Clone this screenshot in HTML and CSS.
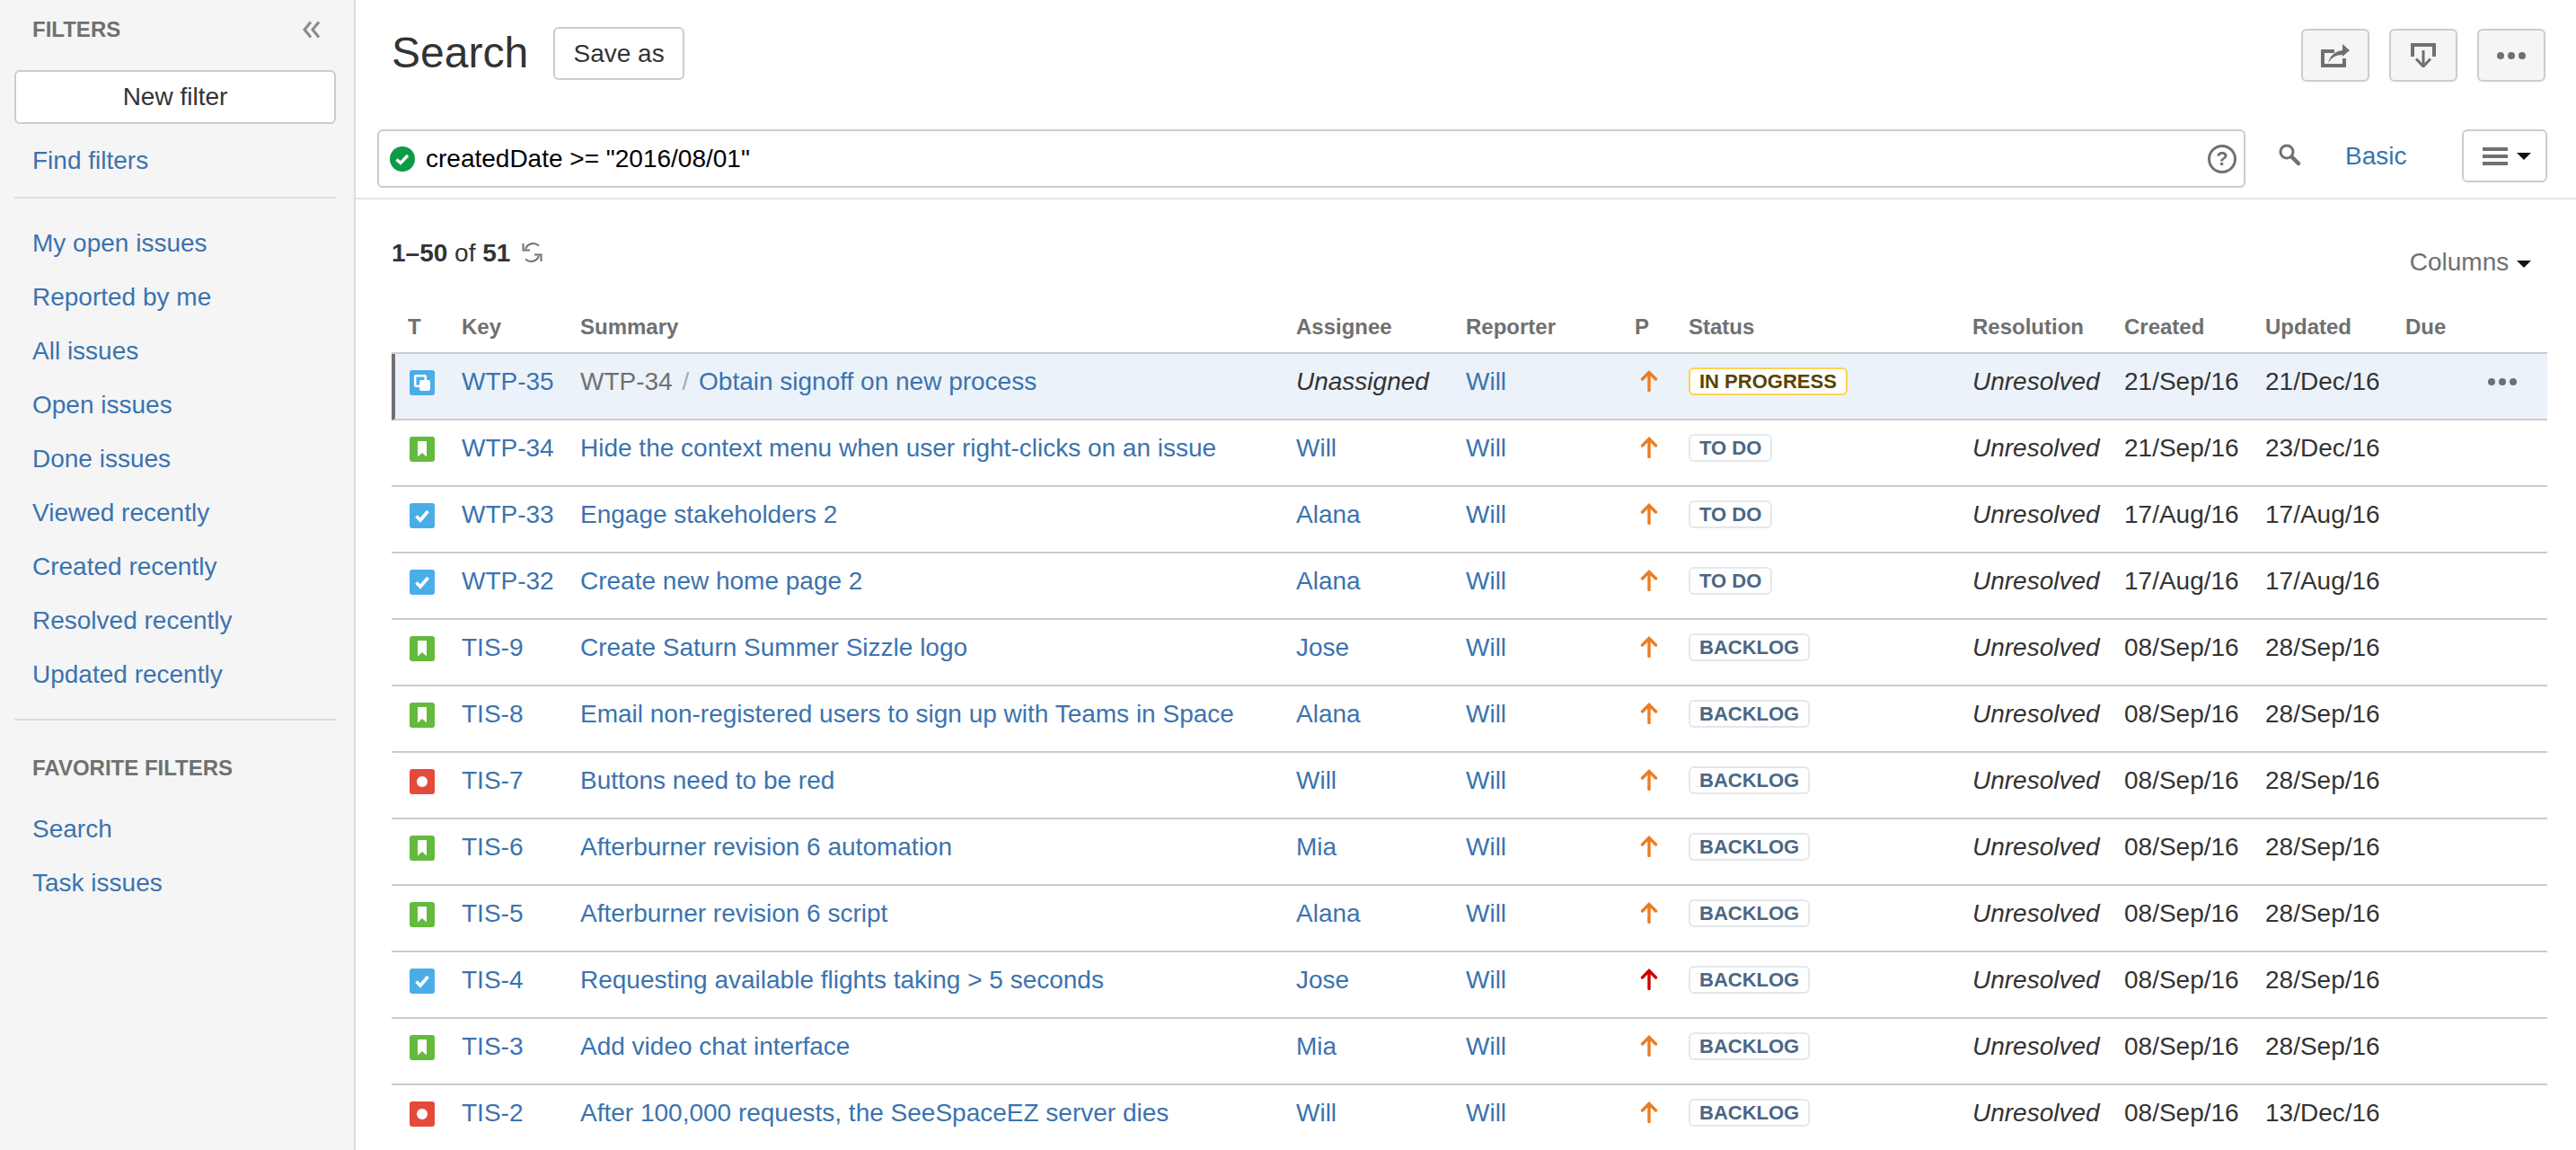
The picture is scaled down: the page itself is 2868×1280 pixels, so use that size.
FILE: index.html
```html
<!DOCTYPE html>
<html lang="en">
<head>
  <meta charset="UTF-8" />
  <title>Search</title>
  <link rel="stylesheet" href="styles.css">
</head>
<body>

  <svg class="sprites" width="0" height="0">
    <symbol id="icon-subtask" viewBox="0 0 28 28">
      <rect width="28" height="28" rx="3" fill="#4bade8"/>
      <rect x="5" y="5" width="14" height="14" rx="2" fill="#fff"/>
      <rect x="7.500" y="7.500" width="9" height="9" fill="#4bade8"/>
      <rect x="11" y="11" width="12" height="12" rx="2" fill="#fff"/>
    </symbol>
    <symbol id="icon-story" viewBox="0 0 28 28">
      <rect width="28" height="28" rx="3" fill="#63ba3c"/>
      <path d="M10 5h8a1 1 0 0 1 1 1v16.500l-5-4.500-5 4.500V6a1 1 0 0 1 1-1z" fill="#fff"/>
    </symbol>
    <symbol id="icon-task" viewBox="0 0 28 28">
      <rect width="28" height="28" rx="3" fill="#4bade8"/>
      <path d="M7.500 14.500l4.500 4.500 8.500-10" fill="none" stroke="#fff" stroke-width="3.600"/>
    </symbol>
    <symbol id="icon-bug" viewBox="0 0 28 28">
      <rect width="28" height="28" rx="3" fill="#e5493a"/>
      <circle cx="14" cy="14" r="6" fill="#fff"/>
    </symbol>
    <symbol id="icon-arrow" viewBox="0 0 20 24">
      <path d="M10 3v19.500M2.500 10L10 2.500l7.500 7.500" fill="none" stroke="currentColor" stroke-width="3.400" stroke-linecap="round"/>
    </symbol>
  </svg>

  <div class="shell">

    <aside class="sidebar">
      <div class="sidebar-head">
        <span class="sidebar-title">FILTERS</span>
        <svg class="collapse-icon" width="22" height="20" viewBox="0 0 22 20">
          <path d="M10 1.500L3 10l7 8.500M19 1.500L12 10l7 8.500" fill="none" stroke="#8a8a8a" stroke-width="3"/>
        </svg>
      </div>
      <button class="new-filter">New filter</button>
      <a class="find-filters" href="#">Find filters</a>
      <hr class="sidebar-rule">
      <nav class="filter-list">
        <a href="#">My open issues</a>
        <a href="#">Reported by me</a>
        <a href="#">All issues</a>
        <a href="#">Open issues</a>
        <a href="#">Done issues</a>
        <a href="#">Viewed recently</a>
        <a href="#">Created recently</a>
        <a href="#">Resolved recently</a>
        <a href="#">Updated recently</a>
      </nav>
      <hr class="sidebar-rule rule-low">
      <div class="sidebar-title favorite-title">FAVORITE FILTERS</div>
      <nav class="filter-list">
        <a href="#">Search</a>
        <a href="#">Task issues</a>
      </nav>
    </aside>

    <main class="main">

      <header class="page-head">
        <h1>Search</h1>
        <button class="save-as">Save as</button>
        <div class="head-actions">
          <button class="tool-btn">
            <svg width="32" height="26" viewBox="0 0 32 26">
              <path d="M0 6h15v4H4v12h20v-6h4v10H0z" fill="#707070"/>
              <path d="M8 21c2-8 8-13 16-14V0l8 7-8 7v-2c-7 0-12 3-16 9z" fill="#707070"/>
            </svg>
          </button>
          <button class="tool-btn">
            <svg width="28" height="27" viewBox="0 0 28 27">
              <path d="M0 0h28v15h-4V4H4v11H0z" fill="#707070"/>
              <path d="M14 8v18M6 17.500l8 8.500 8-8.500" fill="none" stroke="#707070" stroke-width="3"/>
            </svg>
          </button>
          <button class="tool-btn">
            <span class="dots"><i></i><i></i><i></i></span>
          </button>
        </div>
      </header>

      <section class="search-row">
        <div class="query-box">
          <svg class="query-ok" width="28" height="28" viewBox="0 0 28 28">
            <circle cx="14" cy="14" r="14" fill="#0e9b48"/>
            <path d="M7.500 14.500l4.500 4 8-8.500" fill="none" stroke="#fff" stroke-width="3.400"/>
          </svg>
          <span class="query-text">createdDate &gt;= "2016/08/01"</span>
          <span class="help-icon">?</span>
        </div>
        <svg class="search-icon" width="25" height="24" viewBox="0 0 25 24">
          <circle cx="9" cy="9" r="7" fill="none" stroke="#707070" stroke-width="3"/>
          <path d="M14.500 14.500L22 22" stroke="#707070" stroke-width="4.500" stroke-linecap="round"/>
        </svg>
        <a class="basic-link" href="#">Basic</a>
        <button class="view-btn">
          <span class="burger"><i></i><i></i><i></i></span>
          <span class="caret"></span>
        </button>
      </section>

      <section class="results">
        <div class="results-tools">
          <div class="result-count">
            <b>1–50</b> of <b>51</b>
            <svg class="refresh-icon" width="25" height="24" viewBox="0 0 25 24">
              <path d="M20 4.500C15 .5 8 1.500 5 8M2.500 2v7.500H10M5 19.500c5 4 12 3 15-3.500M22.500 22v-7.500H15" fill="none" stroke="#707070" stroke-width="2"/>
            </svg>
          </div>
          <div class="columns-btn">Columns <span class="caret"></span></div>
        </div>

        <table class="issues">
          <colgroup>
            <col class="col-type"><col class="col-key"><col class="col-summary"><col class="col-assignee">
            <col class="col-reporter"><col class="col-priority"><col class="col-status"><col class="col-resolution">
            <col class="col-created"><col class="col-updated"><col class="col-due"><col class="col-actions">
          </colgroup>
          <thead>
            <tr>
              <th class="type-cell">T</th><th>Key</th><th>Summary</th><th>Assignee</th><th>Reporter</th><th>P</th>
              <th>Status</th><th>Resolution</th><th>Created</th><th>Updated</th><th>Due</th><th></th>
            </tr>
          </thead>
          <tbody>
            <tr class="focused">
              <td class="type-cell"><svg class="type-icon"><use href="#icon-subtask"/></svg></td>
              <td><a href="#">WTP-35</a></td>
              <td><a class="parent-key" href="#">WTP-34</a> <span class="slash">/</span> <a href="#">Obtain signoff on new process</a></td>
              <td><em>Unassigned</em></td>
              <td><a href="#">Will</a></td>
              <td><svg class="priority"><use href="#icon-arrow"/></svg></td>
              <td><span class="lozenge lozenge-progress">IN PROGRESS</span></td>
              <td><em>Unresolved</em></td>
              <td>21/Sep/16</td><td>21/Dec/16</td><td></td>
              <td><span class="dots row-dots"><i></i><i></i><i></i></span></td>
            </tr>
            <tr>
              <td class="type-cell"><svg class="type-icon"><use href="#icon-story"/></svg></td>
              <td><a href="#">WTP-34</a></td>
              <td><a href="#">Hide the context menu when user right-clicks on an issue</a></td>
              <td><a href="#">Will</a></td>
              <td><a href="#">Will</a></td>
              <td><svg class="priority"><use href="#icon-arrow"/></svg></td>
              <td><span class="lozenge">TO DO</span></td>
              <td><em>Unresolved</em></td>
              <td>21/Sep/16</td><td>23/Dec/16</td><td></td><td></td>
            </tr>
            <tr>
              <td class="type-cell"><svg class="type-icon"><use href="#icon-task"/></svg></td>
              <td><a href="#">WTP-33</a></td>
              <td><a href="#">Engage stakeholders 2</a></td>
              <td><a href="#">Alana</a></td>
              <td><a href="#">Will</a></td>
              <td><svg class="priority"><use href="#icon-arrow"/></svg></td>
              <td><span class="lozenge">TO DO</span></td>
              <td><em>Unresolved</em></td>
              <td>17/Aug/16</td><td>17/Aug/16</td><td></td><td></td>
            </tr>
            <tr>
              <td class="type-cell"><svg class="type-icon"><use href="#icon-task"/></svg></td>
              <td><a href="#">WTP-32</a></td>
              <td><a href="#">Create new home page 2</a></td>
              <td><a href="#">Alana</a></td>
              <td><a href="#">Will</a></td>
              <td><svg class="priority"><use href="#icon-arrow"/></svg></td>
              <td><span class="lozenge">TO DO</span></td>
              <td><em>Unresolved</em></td>
              <td>17/Aug/16</td><td>17/Aug/16</td><td></td><td></td>
            </tr>
            <tr>
              <td class="type-cell"><svg class="type-icon"><use href="#icon-story"/></svg></td>
              <td><a href="#">TIS-9</a></td>
              <td><a href="#">Create Saturn Summer Sizzle logo</a></td>
              <td><a href="#">Jose</a></td>
              <td><a href="#">Will</a></td>
              <td><svg class="priority"><use href="#icon-arrow"/></svg></td>
              <td><span class="lozenge">BACKLOG</span></td>
              <td><em>Unresolved</em></td>
              <td>08/Sep/16</td><td>28/Sep/16</td><td></td><td></td>
            </tr>
            <tr>
              <td class="type-cell"><svg class="type-icon"><use href="#icon-story"/></svg></td>
              <td><a href="#">TIS-8</a></td>
              <td><a href="#">Email non-registered users to sign up with Teams in Space</a></td>
              <td><a href="#">Alana</a></td>
              <td><a href="#">Will</a></td>
              <td><svg class="priority"><use href="#icon-arrow"/></svg></td>
              <td><span class="lozenge">BACKLOG</span></td>
              <td><em>Unresolved</em></td>
              <td>08/Sep/16</td><td>28/Sep/16</td><td></td><td></td>
            </tr>
            <tr>
              <td class="type-cell"><svg class="type-icon"><use href="#icon-bug"/></svg></td>
              <td><a href="#">TIS-7</a></td>
              <td><a href="#">Buttons need to be red</a></td>
              <td><a href="#">Will</a></td>
              <td><a href="#">Will</a></td>
              <td><svg class="priority"><use href="#icon-arrow"/></svg></td>
              <td><span class="lozenge">BACKLOG</span></td>
              <td><em>Unresolved</em></td>
              <td>08/Sep/16</td><td>28/Sep/16</td><td></td><td></td>
            </tr>
            <tr>
              <td class="type-cell"><svg class="type-icon"><use href="#icon-story"/></svg></td>
              <td><a href="#">TIS-6</a></td>
              <td><a href="#">Afterburner revision 6 automation</a></td>
              <td><a href="#">Mia</a></td>
              <td><a href="#">Will</a></td>
              <td><svg class="priority"><use href="#icon-arrow"/></svg></td>
              <td><span class="lozenge">BACKLOG</span></td>
              <td><em>Unresolved</em></td>
              <td>08/Sep/16</td><td>28/Sep/16</td><td></td><td></td>
            </tr>
            <tr>
              <td class="type-cell"><svg class="type-icon"><use href="#icon-story"/></svg></td>
              <td><a href="#">TIS-5</a></td>
              <td><a href="#">Afterburner revision 6 script</a></td>
              <td><a href="#">Alana</a></td>
              <td><a href="#">Will</a></td>
              <td><svg class="priority"><use href="#icon-arrow"/></svg></td>
              <td><span class="lozenge">BACKLOG</span></td>
              <td><em>Unresolved</em></td>
              <td>08/Sep/16</td><td>28/Sep/16</td><td></td><td></td>
            </tr>
            <tr>
              <td class="type-cell"><svg class="type-icon"><use href="#icon-task"/></svg></td>
              <td><a href="#">TIS-4</a></td>
              <td><a href="#">Requesting available flights taking &gt; 5 seconds</a></td>
              <td><a href="#">Jose</a></td>
              <td><a href="#">Will</a></td>
              <td><svg class="priority priority-high"><use href="#icon-arrow"/></svg></td>
              <td><span class="lozenge">BACKLOG</span></td>
              <td><em>Unresolved</em></td>
              <td>08/Sep/16</td><td>28/Sep/16</td><td></td><td></td>
            </tr>
            <tr>
              <td class="type-cell"><svg class="type-icon"><use href="#icon-story"/></svg></td>
              <td><a href="#">TIS-3</a></td>
              <td><a href="#">Add video chat interface</a></td>
              <td><a href="#">Mia</a></td>
              <td><a href="#">Will</a></td>
              <td><svg class="priority"><use href="#icon-arrow"/></svg></td>
              <td><span class="lozenge">BACKLOG</span></td>
              <td><em>Unresolved</em></td>
              <td>08/Sep/16</td><td>28/Sep/16</td><td></td><td></td>
            </tr>
            <tr>
              <td class="type-cell"><svg class="type-icon"><use href="#icon-bug"/></svg></td>
              <td><a href="#">TIS-2</a></td>
              <td><a href="#">After 100,000 requests, the SeeSpaceEZ server dies</a></td>
              <td><a href="#">Will</a></td>
              <td><a href="#">Will</a></td>
              <td><svg class="priority"><use href="#icon-arrow"/></svg></td>
              <td><span class="lozenge">BACKLOG</span></td>
              <td><em>Unresolved</em></td>
              <td>08/Sep/16</td><td>13/Dec/16</td><td></td><td></td>
            </tr>
          </tbody>
        </table>
      </section>

    </main>
  </div>

</body>
</html>
```

FILE: styles.css
```css
body {
  font-family: "Liberation Sans", Arial, sans-serif;
  font-size: 28px;
  line-height: 40px;
  margin: 0;
  height: 1280px;
  overflow: hidden;
  background-color: #fff;
  color: #333;
}

a {
  color: #3b73af;
  text-decoration: none;
}

button {
  font-family: inherit;
  font-size: 28px;
  color: #333;
  background-color: #fff;
  border: 2px solid #ccc;
  border-radius: 6px;
  padding: 0;
}

.sprites {
  position: absolute;
}

.shell {
  display: flex;
  height: 1280px;
}

/* sidebar */
.sidebar {
  box-sizing: border-box;
  width: 396px;
  flex: none;
  padding: 0 20px 0 16px;
  background-color: #f5f5f5;
  border-right: 2px solid #ddd;
}

.sidebar-head {
  display: flex;
  align-items: center;
  justify-content: space-between;
  height: 66px;
  padding: 0 18px 0 20px;
}

.sidebar-title {
  font-size: 24px;
  font-weight: bold;
  color: #707070;
}

.collapse-icon {
  display: block;
  margin-right: -2px;
}

.new-filter {
  display: block;
  width: 100%;
  height: 60px;
  margin-top: 12px;
}

.find-filters {
  display: block;
  margin: 21px 0 0 20px;
}

.sidebar-rule {
  height: 2px;
  margin: 20px 0 0;
  border: none;
  background-color: #ddd;
}

.rule-low {
  margin-top: 19px;
}

.filter-list {
  padding-left: 20px;
}

.filter-list a {
  display: block;
  line-height: 60px;
}

.sidebar-rule + .filter-list {
  margin-top: 20px;
}

.favorite-title {
  margin: 33px 0 0 20px;
  line-height: 40px;
}

.favorite-title + .filter-list {
  margin-top: 18px;
}

/* page header */
.main {
  flex: 1;
  min-width: 0;
}

.page-head {
  display: flex;
  align-items: flex-start;
  box-sizing: border-box;
  height: 144px;
  padding: 0 34px 0 40px;
}

.page-head h1 {
  font-size: 48px;
  font-weight: normal;
  line-height: 60px;
  margin: 29px 0 0;
}

.save-as {
  width: 146px;
  height: 59px;
  margin: 30px 0 0 28px;
}

.head-actions {
  display: flex;
  gap: 22px;
  margin: 32px 0 0 auto;
}

.tool-btn {
  display: flex;
  align-items: center;
  justify-content: center;
  width: 76px;
  height: 59px;
  background-color: #f5f5f5;
}

.dots {
  display: flex;
  gap: 4px;
}

.dots i {
  width: 8px;
  height: 8px;
  border-radius: 50%;
  background-color: #707070;
}

/* query bar */
.search-row {
  display: flex;
  align-items: flex-start;
  box-sizing: border-box;
  height: 78px;
  padding-left: 24px;
  border-bottom: 2px solid #e4e4e4;
}

.query-box {
  display: flex;
  align-items: center;
  box-sizing: border-box;
  width: 2080px;
  height: 65px;
  padding: 0 8px 0 12px;
  border: 2px solid #ccc;
  border-radius: 6px;
}

.query-ok {
  flex: none;
}

.query-text {
  margin-left: 12px;
  color: #000;
}

.help-icon {
  box-sizing: border-box;
  width: 32px;
  height: 32px;
  margin-left: auto;
  border: 3px solid #707070;
  border-radius: 50%;
  color: #707070;
  font-size: 22px;
  font-weight: bold;
  line-height: 26px;
  text-align: center;
}

.search-icon {
  flex: none;
  margin: 16px 0 0 37px;
}

.basic-link {
  margin: 10px 0 0 49px;
}

.view-btn {
  display: flex;
  align-items: center;
  gap: 10px;
  box-sizing: border-box;
  width: 95px;
  height: 59px;
  margin-left: auto;
  margin-right: 32px;
  padding-left: 21px;
}

.burger {
  display: flex;
  flex-direction: column;
  gap: 4px;
}

.burger i {
  width: 28px;
  height: 4px;
  background-color: #707070;
}

.caret {
  display: inline-block;
  width: 0;
  height: 0;
  border-left: 8px solid transparent;
  border-right: 8px solid transparent;
  border-top: 8px solid #111;
}

/* results */
.results {
  padding: 40px 32px 0 40px;
}

.results-tools {
  display: flex;
  justify-content: space-between;
  height: 82px;
}

.result-count {
  display: flex;
  align-items: center;
  height: 40px;
  white-space: pre;
}

.refresh-icon {
  margin: -2px 0 0 12px;
}

.columns-btn {
  margin-top: 10px;
  margin-right: 18px;
  color: #707070;
}

.columns-btn .caret {
  margin-left: 1px;
  vertical-align: 3px;
}

.issues {
  table-layout: fixed;
  width: 2400px;
  border-spacing: 0;
}

.col-type { width: 68px; }
.col-key { width: 132px; }
.col-summary { width: 797px; }
.col-assignee { width: 189px; }
.col-reporter { width: 188px; }
.col-priority { width: 60px; }
.col-status { width: 316px; }
.col-resolution { width: 169px; }
.col-created { width: 157px; }
.col-updated { width: 156px; }
.col-due { width: 100px; }
.col-actions { width: 68px; }

.issues th {
  padding: 0 0 8px 10px;
  font-size: 24px;
  font-weight: bold;
  text-align: left;
  color: #707070;
  border-bottom: 2px solid #ccc;
}

.issues th.type-cell {
  padding-left: 18px;
}

.issues td {
  box-sizing: border-box;
  height: 74px;
  padding: 11px 0 21px 10px;
  vertical-align: top;
  white-space: nowrap;
  border-bottom: 2px solid #ccc;
}

.issues td.type-cell {
  padding-left: 20px;
}

.focused td {
  background-color: #ebf2f9;
}

.focused td.type-cell {
  padding-left: 16px;
  border-left: 4px solid #707070;
}

.type-icon {
  display: block;
  width: 28px;
  height: 28px;
  margin-top: 7px;
}

.parent-key {
  color: #707070;
}

.slash {
  padding: 0 3px;
  color: #aaa;
}

.priority {
  display: block;
  width: 20px;
  height: 24px;
  margin: 7px 0 0 6px;
  color: #ea7d24;
}

.priority-high {
  color: #ce0000;
}

.lozenge {
  display: block;
  box-sizing: border-box;
  width: fit-content;
  height: 31px;
  margin-top: 4px;
  padding: 0 10px;
  font-size: 22px;
  font-weight: bold;
  line-height: 27px;
  color: #4a6785;
  background-color: #fff;
  border: 2px solid #e4e8ed;
  border-radius: 6px;
}

.lozenge-progress {
  color: #594300;
  border-color: #ffd351;
}

.row-dots {
  margin: 16px 0 0 -8px;
}
```
